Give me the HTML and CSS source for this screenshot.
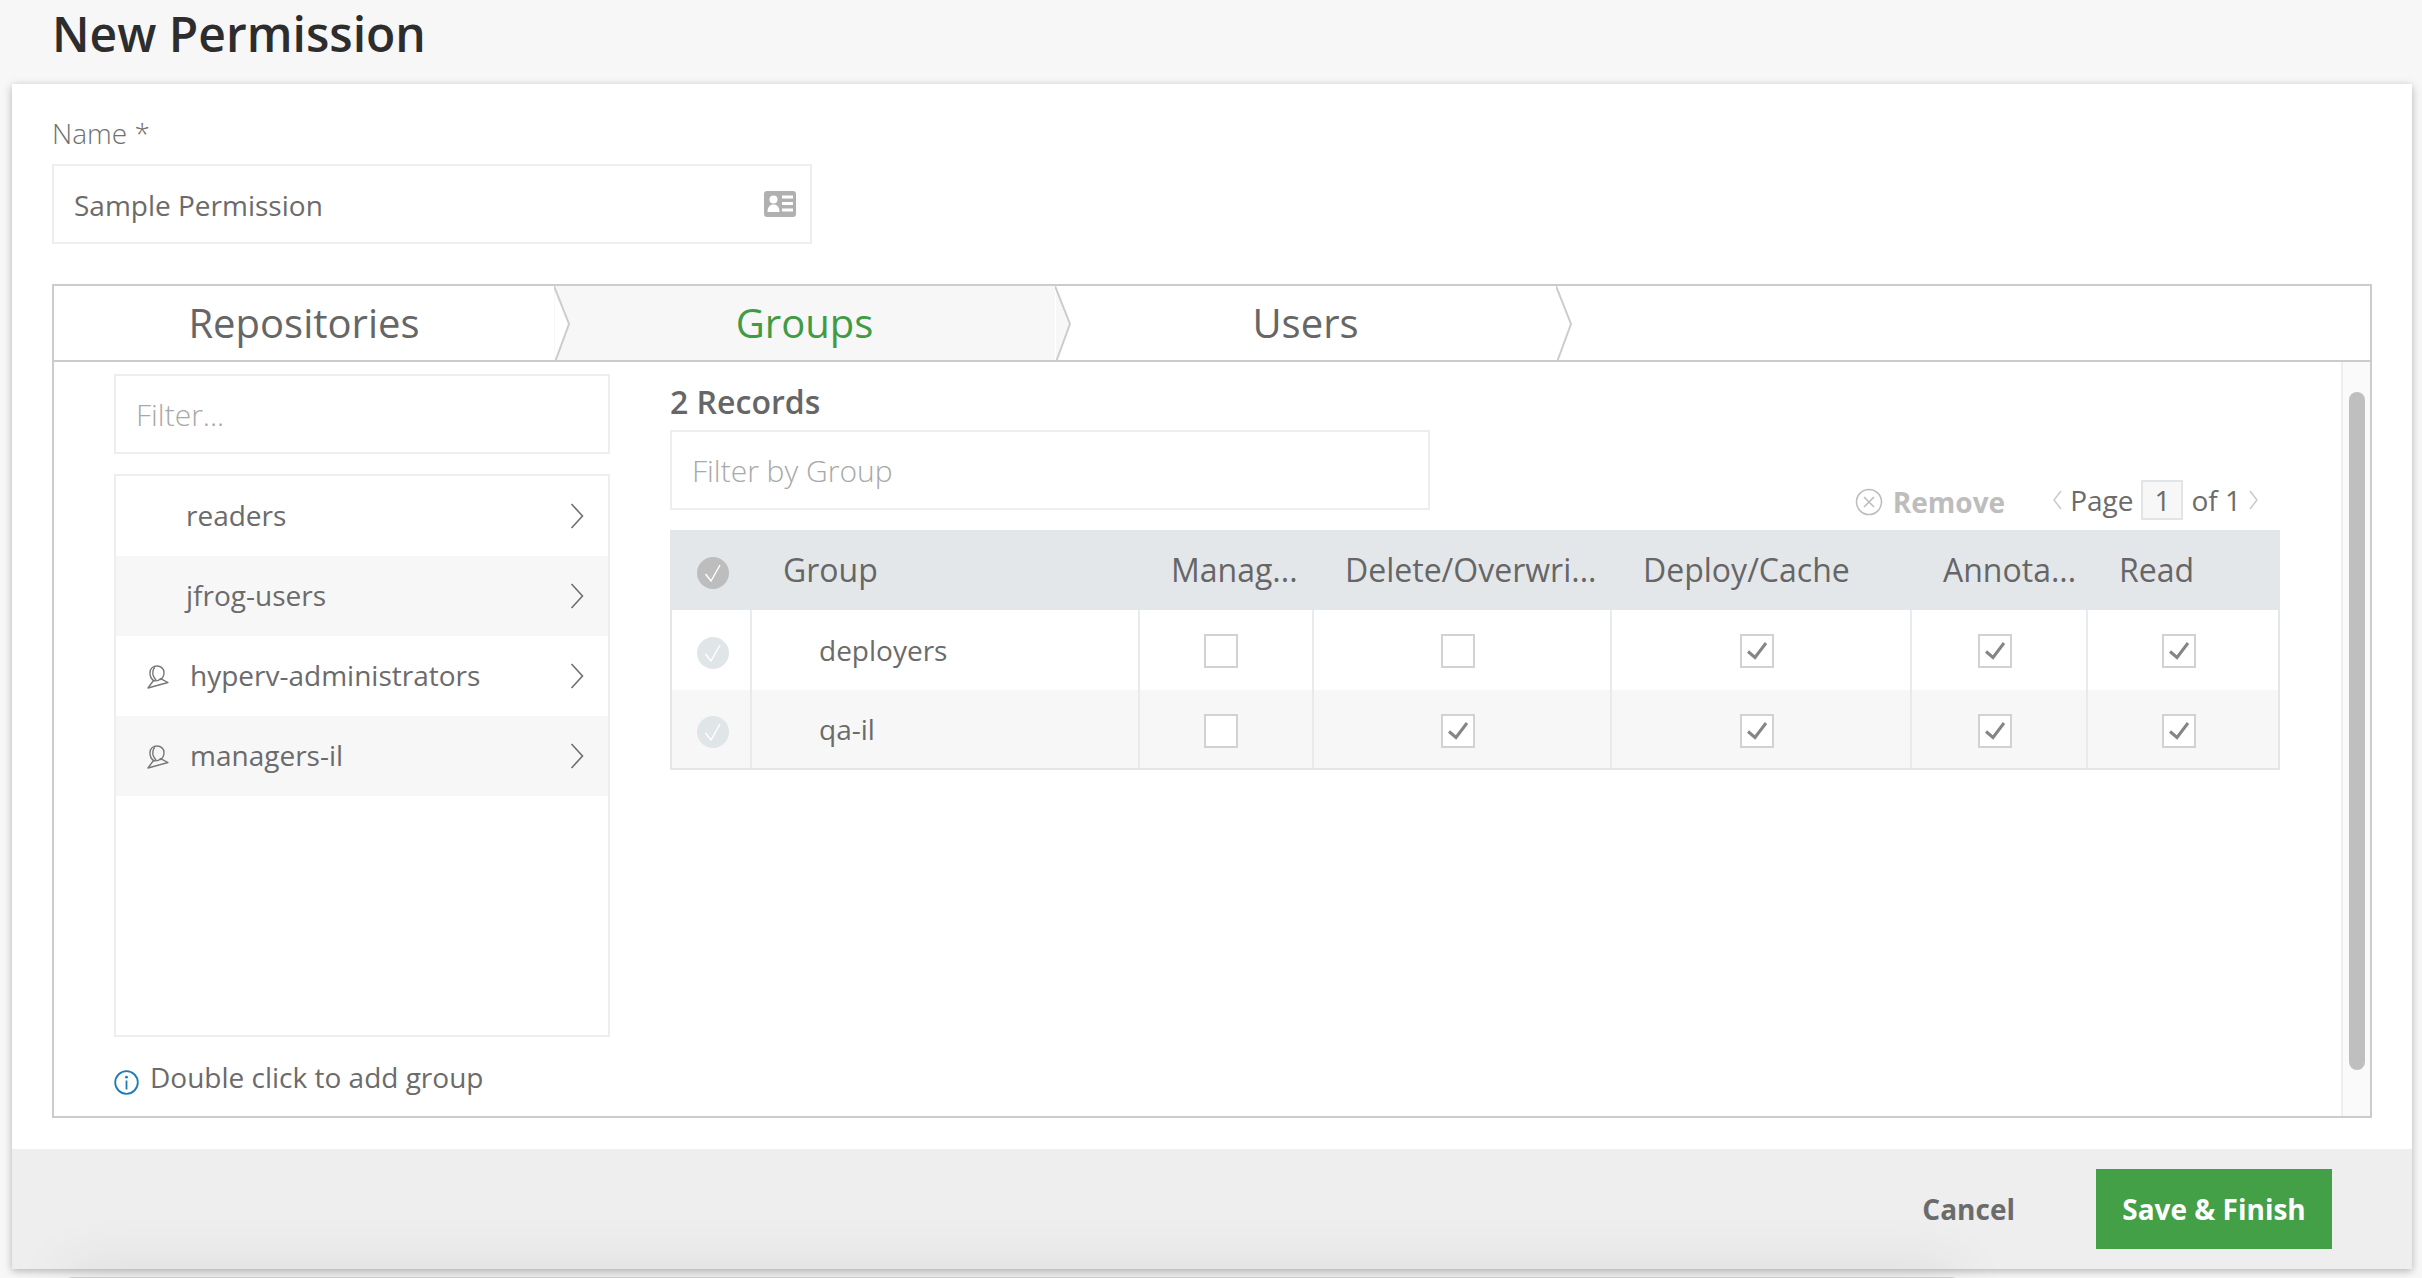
FILE: index.html
```html
<!DOCTYPE html>
<html lang="en">
<head>
<meta charset="utf-8">
<title>New Permission</title>
<link rel="stylesheet" href="styles.css">
</head>
<body>
<svg class="defs" width="0" height="0" aria-hidden="true">
  <defs>
    <symbol id="chev" viewBox="0 0 14 26"><path d="M1.5 1 12.5 13 1.5 25" fill="none" stroke="#6f6f6f" stroke-width="1.6"/></symbol>
    <symbol id="person" viewBox="0 0 22 24"><g fill="none" stroke="#777" stroke-width="1.4" stroke-linejoin="round"><path d="M7 16c-2.800-2-4.200-5-4-8.500C3.200 3.800 6 1 10 1c4 0 7 2.800 7 6.500 0 3.500-1.600 6-4 7.300"/><path d="M8 2.200C5.800 4 5.200 8 6.400 11c.6 1.600 1.600 3 2.800 3.800"/><path d="M6.500 15.500 1 23l20-5.500-7.500-3.800c-1.500 1.700-4.500 2.500-7 1.800z"/></g></symbol>
    <symbol id="mark" viewBox="0 0 32 32"><path d="M8.500 17 14 24 23 8" fill="none" stroke="#fff" stroke-width="1.400"/></symbol>
    <symbol id="tick" viewBox="0 0 30 30"><path d="M6 15.500 13 21.500 24 7" fill="none" stroke="#858585" stroke-width="3"/></symbol>
  </defs>
</svg>
<header class="page-head"><h1 class="page-title">New Permission</h1></header>
<main class="card">
  <div class="card-body">
    <div class="field-label">Name *</div>
    <div class="input name-input">
      <span class="input-value">Sample Permission</span>
      <svg class="id-icon" width="32" height="26" viewBox="0 0 32 26"><rect width="32" height="26" rx="3" fill="#b0b0b0"/><circle cx="9.500" cy="8.500" r="4" fill="#fff"/><path d="M3.500 21c0-5 2.500-7.500 6-7.500s6 2.500 6 7.500z" fill="#fff"/><path d="M18 6h11M18 12.500h11M18 19h11" stroke="#fff" stroke-width="3"/></svg>
    </div>
    <section class="wizard">
      <nav class="tabs">
        <div class="tab tab-first">Repositories<svg class="tab-chevron" width="18" height="76" viewBox="0 0 18 76"><path d="M1 0 15 38 1 76z" fill="#fff"/><path d="M0 0 15 38 1 76" fill="none" stroke="#ccc" stroke-width="2"/></svg></div>
        <div class="tab tab-active">Groups<svg class="tab-chevron" width="18" height="76" viewBox="0 0 18 76"><path d="M1 0 15 38 1 76z" fill="#f7f7f7"/><path d="M0 0 15 38 1 76" fill="none" stroke="#ccc" stroke-width="2"/></svg></div>
        <div class="tab tab-last">Users<svg class="tab-chevron" width="18" height="76" viewBox="0 0 18 76"><path d="M1 0 15 38 1 76z" fill="#fff"/><path d="M0 0 15 38 1 76" fill="none" stroke="#ccc" stroke-width="2"/></svg></div>
      </nav>
      <div class="wizard-content">
        <aside class="side">
          <div class="input side-filter"><span class="placeholder">Filter...</span></div>
          <ul class="group-list">
            <li class="group-item"><span class="group-name">readers</span><svg class="chev" width="14" height="26"><use href="#chev"/></svg></li>
            <li class="group-item"><span class="group-name">jfrog-users</span><svg class="chev" width="14" height="26"><use href="#chev"/></svg></li>
            <li class="group-item has-icon"><svg class="person" width="22" height="24"><use href="#person"/></svg><span class="group-name">hyperv-administrators</span><svg class="chev" width="14" height="26"><use href="#chev"/></svg></li>
            <li class="group-item has-icon"><svg class="person" width="22" height="24"><use href="#person"/></svg><span class="group-name">managers-il</span><svg class="chev" width="14" height="26"><use href="#chev"/></svg></li>
          </ul>
          <div class="hint">
            <svg class="info" width="25" height="25" viewBox="0 0 25 25"><circle cx="12.500" cy="12.500" r="11.300" fill="none" stroke="#1c7cb8" stroke-width="1.800"/><circle cx="12.500" cy="7.200" r="1.400" fill="#1c7cb8"/><path d="M12.500 10.500v9" stroke="#1c7cb8" stroke-width="1.800"/></svg>
            <span>Double click to add group</span>
          </div>
        </aside>
        <div class="records">
          <div class="records-count">2 Records</div>
          <div class="records-bar">
            <div class="input group-filter"><span class="placeholder">Filter by Group</span></div>
            <div class="toolbar">
              <span class="remove">
                <svg width="28" height="28" viewBox="0 0 28 28"><circle cx="14" cy="14" r="12.500" fill="none" stroke="#bdbdbd" stroke-width="1.600"/><path d="M9 9 19 19M19 9 9 19" stroke="#bdbdbd" stroke-width="1.600"/></svg>
                <span>Remove</span>
              </span>
              <span class="pager">
                <svg class="pg-chev" width="9" height="20" viewBox="0 0 9 20"><path d="M8 1 1 10 8 19" fill="none" stroke="#c8c8c8" stroke-width="1.400"/></svg>
                <span>Page</span>
                <span class="page-box">1</span>
                <span>of 1</span>
                <svg class="pg-chev" width="9" height="20" viewBox="0 0 9 20"><path d="M1 1 8 10 1 19" fill="none" stroke="#c8c8c8" stroke-width="1.400"/></svg>
              </span>
            </div>
          </div>
          <div class="table">
            <div class="row row-head">
              <div class="cell"><span class="circle circle-head"><svg width="32" height="32"><use href="#mark"/></svg></span></div>
              <div class="cell head-text">Group</div>
              <div class="cell head-text">Manag...</div>
              <div class="cell head-text">Delete/Overwri...</div>
              <div class="cell head-text">Deploy/Cache</div>
              <div class="cell head-text">Annota...</div>
              <div class="cell head-text">Read</div>
            </div>
            <div class="row">
              <div class="cell"><span class="circle"><svg width="32" height="32"><use href="#mark"/></svg></span></div>
              <div class="cell name-cell">deployers</div>
              <div class="cell check-cell"><span class="check"></span></div>
              <div class="cell check-cell"><span class="check"></span></div>
              <div class="cell check-cell"><span class="check"><svg width="30" height="30"><use href="#tick"/></svg></span></div>
              <div class="cell check-cell"><span class="check"><svg width="30" height="30"><use href="#tick"/></svg></span></div>
              <div class="cell check-cell"><span class="check"><svg width="30" height="30"><use href="#tick"/></svg></span></div>
            </div>
            <div class="row row-alt">
              <div class="cell"><span class="circle"><svg width="32" height="32"><use href="#mark"/></svg></span></div>
              <div class="cell name-cell">qa-il</div>
              <div class="cell check-cell"><span class="check"></span></div>
              <div class="cell check-cell"><span class="check"><svg width="30" height="30"><use href="#tick"/></svg></span></div>
              <div class="cell check-cell"><span class="check"><svg width="30" height="30"><use href="#tick"/></svg></span></div>
              <div class="cell check-cell"><span class="check"><svg width="30" height="30"><use href="#tick"/></svg></span></div>
              <div class="cell check-cell"><span class="check"><svg width="30" height="30"><use href="#tick"/></svg></span></div>
            </div>
          </div>
        </div>
        <div class="scrollbar"><div class="thumb"></div></div>
      </div>
    </section>
  </div>
  <footer class="card-foot">
    <span class="cancel">Cancel</span>
    <span class="save">Save &amp; Finish</span>
  </footer>
</main>
<div class="under-sheet"></div>
</body>
</html>
```
FILE: styles.css
```css
* { box-sizing: border-box; }
html, body { margin: 0; height: 100%; }
body {
  height: 1278px;
  overflow: hidden;
  background: #f7f7f7;
  color: #6b6b6b;
  font-family: "Open Sans", "Liberation Sans", sans-serif;
  font-size: 28px;
  line-height: 38px;
}
.defs { position: absolute; }
.page-head { height: 84px; padding-left: 52px; }
.page-title {
  margin: 0;
  font-size: 48px;
  line-height: 68px;
  font-weight: 600;
  color: #2d2d2d;
}
.card {
  margin: 0 10px 0 12px;
  background: #fff;
  box-shadow: 0 2px 8px rgba(0, 0, 0, .28);
}
.card-body { padding: 30px 40px 31px; }
.field-label { font-weight: 300; color: #707070; margin-bottom: 12px; }
.input {
  display: flex;
  align-items: center;
  justify-content: space-between;
  height: 80px;
  border: 2px solid #eee;
  background: #fff;
  padding: 0 14px 0 20px;
}
.name-input { width: 760px; }
.input-value { position: relative; top: 1px; }
.placeholder { font-size: 30px; font-weight: 300; color: #a8a8a8; position: relative; top: 1px; }
.wizard {
  margin-top: 40px;
  height: 834px;
  border: 2px solid #ccc;
  display: flex;
  flex-direction: column;
}
.tabs { display: flex; height: 76px; border-bottom: 2px solid #ccc; flex: none; }
.tab {
  position: relative;
  display: flex;
  align-items: center;
  justify-content: center;
  width: 501px;
  height: 74px;
  font-size: 40px;
  line-height: 54px;
  font-weight: 400;
  color: #666;
  background: #fff;
}
.tab-first { width: 500px; z-index: 3; }
.tab-active { z-index: 2; color: #3f9c44; background: #f7f7f7; }
.tab-last { z-index: 1; }
.tab-chevron { position: absolute; left: 100%; top: 0; }
.wizard-content { flex: 1; display: flex; min-height: 0; }
.side { width: 556px; padding: 12px 0 0 60px; flex: none; }
.side-filter { height: 80px; }
.group-list {
  list-style: none;
  margin: 20px 0 21px;
  padding: 0;
  height: 563px;
  border: 2px solid #eee;
}
.group-item {
  display: flex;
  align-items: center;
  height: 80px;
  padding: 0 24px 0 70px;
}
.group-item:nth-child(even) { background: #f7f7f7; }
.group-item.has-icon { padding-left: 31px; }
.person { margin-right: 21px; flex: none; position: relative; top: 1px; }
.group-name { flex: 1; position: relative; top: -1px; }
.hint { display: flex; align-items: flex-start; gap: 11px; }
.info { margin-top: 12px; flex: none; }
.records { flex: 1; padding: 20px 0 0 60px; min-width: 0; }
.records-count { font-size: 32px; line-height: 40px; font-weight: 600; color: #666; margin-bottom: 8px; }
.records-bar { display: flex; justify-content: space-between; align-items: flex-end; margin-bottom: 20px; width: 1610px; }
.group-filter { width: 760px; }
.toolbar { display: flex; align-items: center; gap: 48px; margin: 0 22px -10px 0; }
.remove { display: flex; align-items: center; gap: 10px; font-weight: 700; color: #bdbdbd; position: relative; top: 2px; }
.pager { display: flex; align-items: center; gap: 8px; }
.page-box {
  display: flex;
  align-items: center;
  justify-content: center;
  width: 42px;
  height: 40px;
  background: #f7f7f7;
  border: 2px solid #e2e5e8;
}
.table { width: 1610px; }
.row {
  display: grid;
  grid-template-columns: 80px 388px 174px 298px 300px 176px 190px;
  height: 80px;
  border-left: 2px solid #e4e7ea;
  border-right: 2px solid #e4e7ea;
}
.row-alt { background: #f7f7f7; border-bottom: 2px solid #e4e7ea; }
.row-head { background: #e4e7ea; }
.cell { display: flex; align-items: center; border-right: 2px solid #e8ebee; min-width: 0; }
.cell:last-child { border-right: 0; }
.row-head .cell { border-right: 0; padding-left: 31px; }
.row-head .cell:first-child, .row .cell:first-child { padding: 5px 0 0 25px; }
.head-text { font-size: 32px; font-weight: 400; color: #666; white-space: nowrap; }
.name-cell { padding-left: 67px; }
.circle {
  display: block;
  width: 32px;
  height: 32px;
  border-radius: 50%;
  background: #e0e6e8;
}
.circle svg { display: block; }
.circle-head { background: #bdbdbd; }
.check-cell { padding-top: 2px; }
.row-alt .check-cell { padding-top: 4px; }
.check-cell:nth-child(3) { padding-left: 64px; }
.check-cell:nth-child(4) { padding-left: 127px; }
.check-cell:nth-child(5) { padding-left: 128px; }
.check-cell:nth-child(6) { padding-left: 66px; }
.check-cell:nth-child(7) { padding-left: 74px; }
.check {
  display: block;
  width: 34px;
  height: 34px;
  background: #fff;
  border: 2px solid #d2d2d2;
}
.check svg { display: block; }
.scrollbar {
  width: 29px;
  flex: none;
  background: #fafafa;
  border-left: 2px solid #eee;
  padding: 30px 0 0 6px;
}
.thumb { width: 16px; height: 678px; border-radius: 8px; background: #bfbfbf; }
.card-foot {
  display: flex;
  align-items: center;
  justify-content: flex-end;
  gap: 81px;
  height: 120px;
  padding-right: 80px;
  background: #eee;
}
.cancel { font-weight: 700; color: #6b6b6b; }
.save {
  display: flex;
  align-items: center;
  justify-content: center;
  width: 236px;
  height: 80px;
  background: #43a047;
  color: #fff;
  font-weight: 700;
}
.under-sheet {
  position: relative;
  z-index: 1;
  width: 1896px;
  height: 20px;
  margin: 8px 0 0 64px;
  background: #fff;
  border: 1px solid #ccc;
  border-radius: 8px 8px 0 0;
  box-shadow: 0 0 60px rgba(0, 0, 0, .16);
}
```
